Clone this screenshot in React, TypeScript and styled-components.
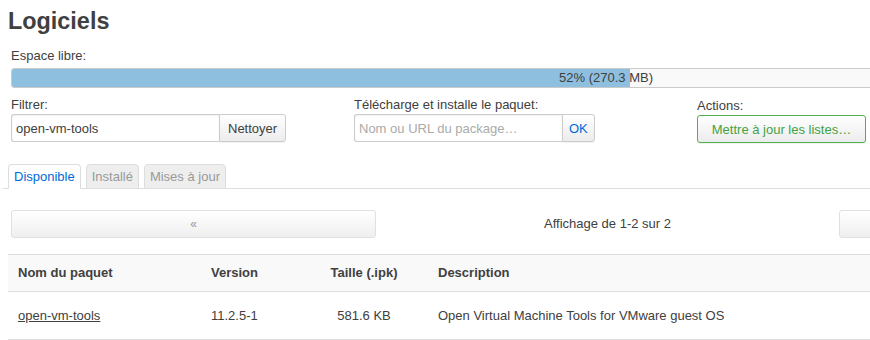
import React from 'react'
import styled, { createGlobalStyle } from 'styled-components'

const GlobalStyle = createGlobalStyle`
  html, body {
    margin: 0;
    padding: 0;
    background: #fff;
    overflow: hidden;
  }
  body {
    font-family: "Liberation Sans", Arial, sans-serif;
    font-size: 13px;
    color: #404040;
  }
`

const packages = [
  {
    name: 'open-vm-tools',
    version: '11.2.5-1',
    size: '581.6 KB',
    description: 'Open Virtual Machine Tools for VMware guest OS',
  },
]

const tabs = ['Disponible', 'Installé', 'Mises à jour']

export default function App() {
  const used = 52

  return (
    <>
      <GlobalStyle />
      <S.Page>
        <S.Title>Logiciels</S.Title>

        <S.Controls $cols="1fr">
          <S.Control>
            <S.Label>Espace libre:</S.Label>
            <S.Bar>
              <S.BarFill style={{ width: `${used}%` }} />
              <S.BarText>{used}% (270.3 MB)</S.BarText>
            </S.Bar>
          </S.Control>
        </S.Controls>

        <S.Controls $cols="343px 343px 343px" $gap={2}>
          <S.Control>
            <S.Label>Filtrer:</S.Label>
            <S.InputGroup>
              <S.Input defaultValue="open-vm-tools" />
              <S.GroupButton>Nettoyer</S.GroupButton>
            </S.InputGroup>
          </S.Control>
          <S.Control>
            <S.Label>Télécharge et installe le paquet:</S.Label>
            <S.InputGroup>
              <S.Input placeholder="Nom ou URL du package…" />
              <S.GroupButton $blue>OK</S.GroupButton>
            </S.InputGroup>
          </S.Control>
          <S.Control $offset={1}>
            <S.Label>Actions:</S.Label>
            <S.ActionButton>Mettre à jour les listes…</S.ActionButton>
          </S.Control>
        </S.Controls>

        <S.Tabs>
          {tabs.map((t, i) => (
            <S.Tab key={t} $active={i === 0}>{t}</S.Tab>
          ))}
        </S.Tabs>

        <S.Pager>
          <S.PagerButton>«</S.PagerButton>
          <S.PagerText>Affichage de 1-2 sur 2</S.PagerText>
          <S.PagerButton>»</S.PagerButton>
        </S.Pager>

        <S.Table>
          <S.Row $head>
            <S.Cell $head>Nom du paquet</S.Cell>
            <S.Cell $head>Version</S.Cell>
            <S.Cell $head $center>Taille (.ipk)</S.Cell>
            <S.Cell $head>Description</S.Cell>
          </S.Row>
          {packages.map(p => (
            <S.Row key={p.name}>
              <S.Cell><S.Link href="#">{p.name}</S.Link></S.Cell>
              <S.Cell>{p.version}</S.Cell>
              <S.Cell $center>{p.size}</S.Cell>
              <S.Cell>{p.description}</S.Cell>
            </S.Row>
          ))}
        </S.Table>
      </S.Page>
    </>
  )
}

interface ControlsProps {
  $cols: string
  $gap?: number
}

interface ControlProps {
  $offset?: number
}

interface BlueProps {
  $blue?: boolean
}

interface TabProps {
  $active?: boolean
}

interface CellProps {
  $head?: boolean
  $center?: boolean
}

const S = {
  Page: styled.div`
    width: 1196px;
    padding: 0 8px;
  `,
  Title: styled.h2`
    margin: 8px 0 10px;
    font-size: 23.4px;
    line-height: 26px;
    font-weight: bold;
    color: #404040;
  `,
  Controls: styled.div<ControlsProps>`
    display: grid;
    grid-template-columns: ${props => props.$cols};
    align-items: start;
    margin-top: ${props => props.$gap || 0}px;
  `,
  Control: styled.div<ControlProps>`
    padding: ${props => 3 + (props.$offset || 0)}px 3px ${props => 3 - (props.$offset || 0)}px;
  `,
  Label: styled.div`
    line-height: 18px;
    white-space: nowrap;
  `,
  Bar: styled.div`
    position: relative;
    margin-top: 3px;
    height: 18px;
    border: 1px solid #cacaca;
    border-radius: 3px;
    background: #f9f9f9;
    overflow: hidden;
  `,
  BarFill: styled.div`
    height: 100%;
    background: #8fbfdf;
  `,
  BarText: styled.div`
    position: absolute;
    inset: 0;
    text-align: center;
    line-height: 18px;
    color: #404040;
  `,
  InputGroup: styled.div`
    display: flex;
    height: 28px;
  `,
  Input: styled.input`
    box-sizing: border-box;
    width: 208px;
    height: 28px;
    margin: 0;
    padding: 0 4px;
    border: 1px solid #ccc;
    border-right: none;
    border-radius: 3px 0 0 3px;
    box-shadow: inset 0 1px 2px rgba(0, 0, 0, 0.06);
    font-family: "Liberation Sans", Arial, sans-serif;
    font-size: 13px;
    color: #404040;
    outline: none;
    &::placeholder {
      color: #aaa;
    }
  `,
  GroupButton: styled.button<BlueProps>`
    box-sizing: border-box;
    height: 28px;
    margin: 0;
    padding: 0 ${props => props.$blue ? 6 : 8}px;
    border: 1px solid #ccc;
    border-radius: 0 3px 3px 0;
    background: linear-gradient(#fff, #ececec);
    box-shadow: 0 1px 1px rgba(0, 0, 0, 0.06);
    font-family: "Liberation Sans", Arial, sans-serif;
    font-size: 13px;
    color: ${props => props.$blue ? '#0069d6' : '#404040'};
    cursor: pointer;
  `,
  ActionButton: styled.button`
    box-sizing: border-box;
    height: 28px;
    width: 169px;
    margin: 0;
    padding: 0 10px;
    border: 1px solid #4fb04f;
    border-radius: 3px;
    background: linear-gradient(#fff, #ececec);
    box-shadow: 0 1px 1px rgba(0, 0, 0, 0.06);
    font-family: "Liberation Sans", Arial, sans-serif;
    font-size: 13px;
    color: #44a244;
    white-space: nowrap;
    cursor: pointer;
  `,
  Tabs: styled.ul`
    display: flex;
    list-style: none;
    margin: 19px 0 0 -5px;
    padding: 0 0 0 5px;
    border-bottom: 1px solid #ddd;
  `,
  Tab: styled.li<TabProps>`
    margin: 0 5px -1px 0;
    padding: 1px 5px 0;
    line-height: 22px;
    border: 1px solid #ddd;
    border-bottom-color: ${props => props.$active ? '#fff' : '#ddd'};
    border-radius: 4px 4px 0 0;
    background: ${props => props.$active ? '#fff' : '#eee'};
    color: ${props => props.$active ? '#0069d6' : '#999'};
    cursor: pointer;
  `,
  Pager: styled.div`
    display: grid;
    grid-template-columns: 365px 1fr 365px;
    width: 1193px;
    margin: 21px 0 0 3px;
    height: 28px;
  `,
  PagerButton: styled.div`
    box-sizing: border-box;
    height: 28px;
    border: 1px solid #e0e0e0;
    border-radius: 3px;
    background: linear-gradient(#fff, #efefef);
    color: #999;
    text-align: center;
    line-height: 26px;
    font-size: 12px;
    cursor: pointer;
  `,
  PagerText: styled.div`
    text-align: center;
    line-height: 28px;
  `,
  Table: styled.div`
    margin-top: 16px;
    border-top: 1px solid #ddd;
  `,
  Row: styled.div<CellProps>`
    display: grid;
    grid-template-columns: 193px 119px 108px 1fr;
    border-bottom: 1px solid #ddd;
    background: ${props => props.$head ? '#f9f9f9' : '#fff'};
  `,
  Cell: styled.div<CellProps>`
    padding: ${props => props.$head ? '9px' : '15px'} ${props => props.$center ? '20px' : '10px'} ${props => props.$head ? '9px' : '14px'} ${props => props.$center ? '0' : '10px'};
    line-height: 18px;
    font-weight: ${props => props.$head ? 'bold' : 'normal'};
    text-align: ${props => props.$center ? 'center' : 'left'};
    white-space: nowrap;
  `,
  Link: styled.a`
    color: #404040;
    text-decoration: underline;
  `,
}
